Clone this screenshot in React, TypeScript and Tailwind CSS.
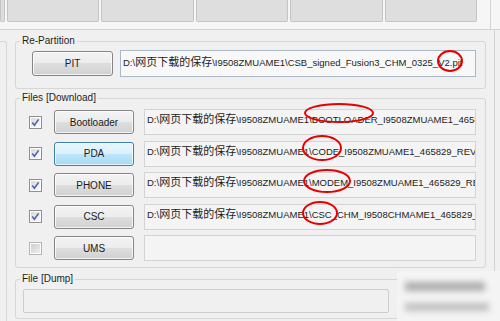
import React from 'react'
import clsx from 'clsx'

const rows = [
  { label: 'Bootloader', on: true, rest: '\\I9508ZMUAME1\\BOOTLOADER_I9508ZMUAME1_465829_REV00_user_low_ship.tar.md5' },
  { label: 'PDA', on: true, active: true, rest: '\\I9508ZMUAME1\\CODE_I9508ZMUAME1_465829_REV00_user_low_ship.tar.md5' },
  { label: 'PHONE', on: true, rest: '\\I9508ZMUAME1\\MODEM_I9508ZMUAME1_465829_REV00_user_low_ship.tar.md5' },
  { label: 'CSC', on: true, rest: '\\I9508ZMUAME1\\CSC_CHM_I9508CHMAME1_465829_REV00_user_low_ship.tar.md5' },
  { label: 'UMS', on: false, rest: '' },
]

// red rings drawn over the screenshot
const rings = [
  { cx: 450, cy: 61, rx: 12, ry: 10 },
  { cx: 339, cy: 113, rx: 34, ry: 9 },
  { cx: 322, cy: 148, rx: 19, ry: 12 },
  { cx: 327, cy: 181, rx: 23, ry: 11 },
  { cx: 320, cy: 213, rx: 17, ry: 11 },
]

function PathText({ rest }: { rest: string }) {
  if (!rest) return null
  return (
    <span className="whitespace-nowrap text-[9.5px] leading-[13px] text-[#1c1c1c] font-['Liberation_Sans',Arial,sans-serif]">
      {'D:\\'}
      <span className="text-[11px] font-['Noto_Sans_CJK_SC',sans-serif]">网页下载的保存</span>
      {rest}
    </span>
  )
}

function Check({ on }: { on: boolean }) {
  return (
    <div className={clsx('w-[13px] h-[13px] shrink-0 border p-[1px] bg-white', on ? 'border-[#8e8f8f]' : 'border-[#b4b4b4]')}>
      <div
        className={clsx(
          'w-full h-full flex items-center justify-center',
          on ? 'bg-[linear-gradient(135deg,#d8d8d8,#fbfbfb)]' : 'bg-[linear-gradient(135deg,#cfcfcf,#ededed)]'
        )}
      >
        {on && (
          <svg width="9" height="9" viewBox="0 0 9 9">
            <path d="M1.3 4.6 L3.4 7.2 L7.6 1.4" stroke="#4862ad" strokeWidth="1.6" fill="none" />
          </svg>
        )}
      </div>
    </div>
  )
}

function Btn({ label, active, className }: { label: string; active?: boolean; className?: string }) {
  return (
    <button
      type="button"
      className={clsx(
        'shrink-0 rounded-[3px] border flex items-center justify-center text-[10px] text-[#1b1b1b] shadow-[inset_0_0_0_1px_rgba(255,255,255,0.75)]',
        active
          ? 'border-[#3c7fb1] bg-[linear-gradient(#eaf6fd_0%,#d9f0fc_50%,#bee6fd_50%,#a7d9f5_100%)]'
          : 'border-[#858585] bg-[linear-gradient(#f3f3f3_0%,#ececec_50%,#dedede_50%,#d1d1d1_100%)]',
        className
      )}
    >
      {label}
    </button>
  )
}

function Group({ title, className, children }: { title: string; className?: string; children: React.ReactNode }) {
  return (
    <fieldset className={clsx('w-[471px] border border-[#d6d6d6] rounded-[3px] p-0 m-0', className)}>
      <legend className="ml-[4px] px-[2px] text-[10px] leading-[12px] text-[#1e1e1e]">{title}</legend>
      {children}
    </fieldset>
  )
}

export default function App() {
  return (
    <div className="relative w-[500px] h-[321px] overflow-hidden bg-[#f0f0f0] font-['Liberation_Sans',Arial,sans-serif]">
      {/* tab strip, tops cut off */}
      <div className="h-[30px] bg-[#f6f6f6] border-b border-[#d4d4d4]">
        <div className="flex gap-[2px] h-[29px] w-[491px] border-r border-[#d4d4d4]">
          {[5, 92, 93, 92, 93, 92].map((w, i) => (
            <div
              key={i}
              style={{ width: w }}
              className="h-[22px] shrink-0 bg-[#dedede] border-x border-b border-[#c4c4c4] rounded-b-[2px]"
            />
          ))}
        </div>
      </div>

      <div className="flex w-[495px] h-full border-r border-[#d4d4d4]">
        <div className="w-[7px] mt-[11px] border-t border-r border-[#d6d6d6] rounded-tr-[3px]" />

        <div className="ml-[8px]">
          <Group title="Re-Partition" className="mt-[5px]">
            <div className="flex items-center gap-[7px] pl-[16px] pt-[3px] pb-[11px]">
              <Btn label="PIT" className="w-[81px] h-[25px]" />
              <div className="w-[356px] h-[27px] overflow-hidden border border-[#abb8c6] bg-[#f8f8f8] pl-[2px] pt-[3px] leading-[13px]">
                <PathText rest={'\\I9508ZMUAME1\\CSB_signed_Fusion3_CHM_0325_V2.pit'} />
              </div>
            </div>
          </Group>

          <Group title="Files [Download]" className="mt-[3px]">
            <div className="flex flex-col gap-[5.5px] pl-[13px] pt-[5px] pb-[6px]">
              {rows.map(r => (
                <div key={r.label} className="flex items-center h-[26px]">
                  <Check on={r.on} />
                  <Btn label={r.label} active={r.active} className="ml-[12px] w-[80px] h-[24px]" />
                  <div className="ml-[10px] w-[332px] h-[26px] overflow-hidden border border-[#d3d3d3] bg-[#f4f4f4] pl-[2px] pt-[1px] leading-[13px]">
                    <PathText rest={r.rest} />
                  </div>
                </div>
              ))}
            </div>
          </Group>

          <Group title="File [Dump]" className="mt-[5px]">
            <div className="pl-[7px] pt-[4px] pb-[5px]">
              <div className="w-[366px] h-[24px] border border-[#cdcdcd] bg-[#f0f0f0] rounded-[2px]" />
            </div>
          </Group>
        </div>
      </div>

      {/* blurred watermark */}
      <div className="absolute left-[397px] top-[271px] w-[103px] h-[50px] bg-[#f4f4f4] flex flex-col justify-center gap-[12px] pl-[8px]">
        <div className="h-[9px] w-[80px] bg-[#8f8f8f] blur-[3px] opacity-70" />
        <div className="h-[8px] w-[84px] bg-[#9c9c9c] blur-[3px] opacity-60" />
      </div>

      <svg className="absolute inset-0 pointer-events-none" width="500" height="321">
        {rings.map((e, i) => (
          <ellipse key={i} cx={e.cx} cy={e.cy} rx={e.rx} ry={e.ry} fill="none" stroke="#e80000" strokeWidth="2" />
        ))}
      </svg>
    </div>
  )
}
